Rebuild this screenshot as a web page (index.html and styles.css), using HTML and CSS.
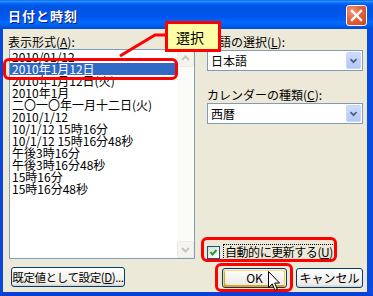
FILE: index.html
```html
<!DOCTYPE html>
<html lang="ja">
<head>
<meta charset="utf-8">
<title>日付と時刻</title>
<link rel="stylesheet" href="styles.css">
</head>
<body>
<div class="window">
  <div class="titlebar">
    <span class="title">日付と時刻</span>
    <span class="close">
      <svg width="19" height="19" viewBox="0 0 19 19"><path d="M5 5 L14 14 M14 5 L5 14" stroke="#fff" stroke-width="2.4" stroke-linecap="square" fill="none"/></svg>
    </span>
  </div>
  <div class="client">
    <div class="left">
      <div class="label">表示形式(<u>A</u>):</div>
      <div class="listbox">
        <ul class="items">
          <li>2010/01/12</li>
          <li class="sel">2010年1月12日</li>
          <li>2010年1月12日(火)</li>
          <li>2010年1月</li>
          <li>二〇一〇年一月十二日(火)</li>
          <li>2010/1/12</li>
          <li>10/1/12 15時16分</li>
          <li>10/1/12 15時16分48秒</li>
          <li>午後3時16分</li>
          <li>午後3時16分48秒</li>
          <li>15時16分</li>
          <li>15時16分48秒</li>
        </ul>
        <div class="vscroll">
          <div class="sbtn"><svg width="15" height="15" viewBox="0 0 15 15"><polyline points="4,9 7.5,5.5 11,9" stroke="#c9c6b8" stroke-width="2" fill="none"/></svg></div>
          <div class="track"></div>
          <div class="sbtn"><svg width="15" height="15" viewBox="0 0 15 15"><polyline points="4,6 7.5,9.5 11,6" stroke="#c9c6b8" stroke-width="2" fill="none"/></svg></div>
        </div>
      </div>
      <button class="btn setdef">既定値として設定(<u>D</u>)...</button>
    </div>
    <div class="right">
      <div class="label">言語の選択(<u>L</u>):</div>
      <div class="combo">
        <span class="value">日本語</span>
        <span class="drop"><svg width="15" height="17" viewBox="0 0 15 17"><polyline points="4,7 7.5,10.5 11,7" stroke="#4d6185" stroke-width="2" fill="none"/></svg></span>
      </div>
      <div class="label second">カレンダーの種類(<u>C</u>):</div>
      <div class="combo">
        <span class="value">西暦</span>
        <span class="drop"><svg width="15" height="17" viewBox="0 0 15 17"><polyline points="4,7 7.5,10.5 11,7" stroke="#4d6185" stroke-width="2" fill="none"/></svg></span>
      </div>
      <div class="spacer"></div>
      <div class="checkrow">
        <span class="cb"><svg width="11" height="11" viewBox="0 0 11 11"><polyline points="2.5,5 4.5,7.5 8.5,3" stroke="#21a121" stroke-width="2" fill="none"/></svg></span>
        <span class="cblabel">自動的に更新する(<u>U</u>)</span>
      </div>
      <div class="buttons">
        <button class="btn ok">OK</button>
        <button class="btn cancel">キャンセル</button>
      </div>
    </div>
  </div>

  <svg class="pointer" width="373" height="296" viewBox="0 0 373 296"><polyline points="167,35 155,35 120,56" stroke="#ff0000" stroke-width="3" fill="none"/></svg>
  <div class="mark mark-sel"></div>
  <div class="mark mark-check"></div>
  <div class="mark mark-ok"></div>
  <div class="callout">選択</div>
  <svg class="cursor" width="13" height="21" viewBox="0 0 13 21"><path d="M0.5 0.5 L0.5 16.5 L4.3 12.9 L7 19.3 L9.3 18.3 L6.7 12 L11.5 12 Z" fill="#fff" stroke="#000" stroke-width="1" stroke-linejoin="miter"/></svg>
</div>
</body>
</html>
```
FILE: styles.css
```css
* { box-sizing: border-box; }
html, body { margin: 0; padding: 0; }
body {
  width: 373px;
  height: 296px;
  overflow: hidden;
  background: #ece9d8;
  font-family: "Noto Sans CJK JP", sans-serif;
  font-size: 12px;
  color: #000;
}
.window {
  position: relative;
  width: 373px;
  height: 296px;
  display: flex;
  flex-direction: column;
}
.titlebar {
  flex: none;
  height: 29px;
  display: flex;
  align-items: flex-start;
  justify-content: space-between;
  padding: 9px 6px 0 8px;
  background: linear-gradient(180deg, #0058ee 0%, #3593ff 4%, #288eff 6%, #127dff 8%, #036ffc 10%, #0262ee 14%, #0057e5 20%, #0054e3 24%, #0055eb 56%, #005bf5 66%, #026afe 76%, #0062ef 86%, #0055e0 94%, #004ad8 100%);
}
.title {
  color: #fff;
  font-weight: bold;
  font-size: 13px;
  line-height: 13px;
  letter-spacing: 1px;
  text-shadow: 1px 1px #0a1883;
}
.close {
  margin-top: -4px;
  width: 21px;
  height: 21px;
  border: 1px solid #fff;
  border-radius: 3px;
  background: radial-gradient(circle at 30% 30%, #f39c7c 0%, #e2613c 45%, #c9451e 100%);
  display: flex;
  align-items: center;
  justify-content: center;
}
.client {
  flex: 1;
  display: flex;
  gap: 12px;
  background: #ece9d8;
  padding: 7px 4px 4px 5px;
  border-left: 3px solid #0a46dc;
  border-right: 6px solid #0a4ae0;
  border-bottom: 4px solid #0a40d6;
}
.left {
  width: 187px;
  flex: none;
  display: flex;
  flex-direction: column;
}
.right {
  flex: 1;
  display: flex;
  flex-direction: column;
}
.label {
  height: 12px;
  line-height: 12px;
  white-space: nowrap;
  margin-bottom: 1px;
}
.right .label { margin-bottom: 2px; }
.listbox {
  margin-left: 1px;
  width: 186px;
  height: 210px;
  border: 1px solid #7f9db9;
  background: #fff;
  display: flex;
}
.items {
  flex: 1;
  list-style: none;
  margin: 0;
  padding: 1px 0 0 0;
}
.items li {
  height: 12px;
  line-height: 12px;
  padding-left: 2px;
  white-space: nowrap;
}
.items li.sel {
  background: #316ac5;
  color: #fff;
}
.vscroll {
  width: 17px;
  flex: none;
  display: flex;
  flex-direction: column;
  background: #fbfbf8;
}
.sbtn {
  height: 17px;
  border: 1px solid #ecebe4;
  border-radius: 2px;
  background: #f5f4ef;
  display: flex;
  align-items: center;
  justify-content: center;
}
.track { flex: 1; }
.btn {
  font: inherit;
  font-size: 12px;
  color: #000;
  height: 20px;
  padding: 0;
  line-height: 18px;
  border: 1px solid #003c74;
  border-radius: 3px;
  background: linear-gradient(180deg, #fff, #ecebe6 86%, #d6d0c5);
  white-space: nowrap;
}
.setdef {
  margin-top: 8px;
  margin-left: 3px;
  width: 114px;
  font-size: 11.5px;
  letter-spacing: -0.4px;
}
.combo {
  height: 21px;
  border: 1px solid #7f9db9;
  background: #fff;
  display: flex;
  align-items: center;
  padding-left: 3px;
}
.combo .value { flex: 1; line-height: 12px; }
.drop {
  width: 15px;
  height: 17px;
  margin-right: 1px;
  border: 1px solid #c6d5fb;
  border-radius: 2px;
  background: linear-gradient(180deg, #cedbfc, #b5c9f6);
  display: flex;
  align-items: center;
  justify-content: center;
}
.right .label.second { margin-top: 18px; }
.spacer { flex: 1; }
.checkrow {
  height: 16px;
  display: flex;
  align-items: center;
  gap: 3px;
  margin-bottom: 8px;
}
.cb {
  width: 13px;
  height: 13px;
  border: 1px solid #1c5180;
  background: linear-gradient(135deg, #dcdcd7, #fff);
  display: flex;
  align-items: center;
  justify-content: center;
}
.cblabel {
  border: 1px dotted #000;
  line-height: 14px;
  padding: 0 1px;
  white-space: nowrap;
  letter-spacing: -0.45px;
}
.buttons {
  display: flex;
  justify-content: flex-end;
  gap: 9px;
}
.ok {
  width: 65px;
  box-shadow: inset -1px 1px #fff0cf, inset 1px 2px #fdd889, inset -2px 2px #fbc761, inset 2px -2px #e5a01a;
}
.cancel { width: 67px; }

/* annotation overlays */
.pointer {
  position: absolute;
  left: 0;
  top: 0;
}
.mark {
  position: absolute;
  border: 3px solid #ff0000;
  border-radius: 6px;
}
.mark-sel { left: 3px; top: 58px; width: 175px; height: 22px; }
.mark-check { left: 201px; top: 237px; width: 136px; height: 25px; }
.mark-ok { left: 215px; top: 263px; width: 78px; height: 29px; }
.callout {
  position: absolute;
  left: 165px;
  top: 21px;
  width: 56px;
  height: 31px;
  border: 3px solid #ff0000;
  background: #ffffa6;
  font-size: 14px;
  line-height: 14px;
  display: flex;
  align-items: center;
  padding-left: 8px;
}
.cursor {
  position: absolute;
  left: 268px;
  top: 271px;
}
```
